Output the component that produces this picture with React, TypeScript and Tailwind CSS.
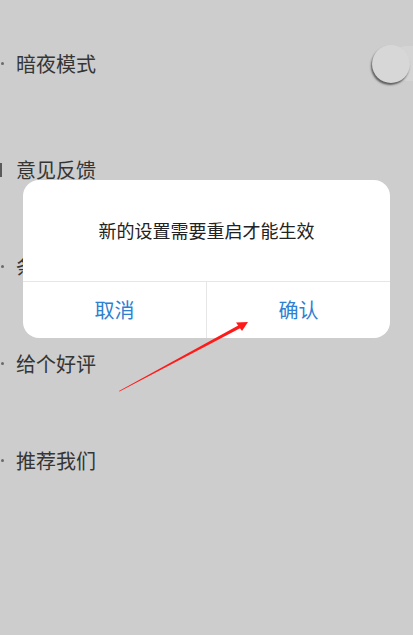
import React from 'react';

const cjk = { fontFamily: '"Noto Sans CJK SC", "Noto Sans", sans-serif' };

const items = [
  { label: '暗夜模式', mark: 'dot', toggle: true },
  { label: '意见反馈', mark: 'bar' },
  { label: '条款说明', mark: 'dot' },
  { label: '给个好评', mark: 'dot' },
  { label: '推荐我们', mark: 'dot' },
];

function Toggle() {
  return (
    <div className="relative mr-[-29px] h-[38px] w-[70px] shrink-0">
      <div className="absolute left-[18px] top-[1px] h-[35px] w-[60px] rounded-full bg-[#d4d4d4]" />
      <div className="absolute left-0 top-0 h-[38px] w-[38px] rounded-full bg-[#d7d7d7] shadow-[-1px_2px_2px_rgba(0,0,0,0.55)]" />
    </div>
  );
}

function Mark({ kind }: { kind: string }) {
  if (kind === 'bar') return <div className="h-[14px] w-[2px] bg-[#5a5a5a]" />;
  return <div className="ml-[1px] h-[3px] w-[3px] rounded-full bg-[#6a6a6a]" />;
}

export default function App() {
  return (
    <div className="relative h-[635px] w-[413px] overflow-hidden bg-[#cdcdcd]" style={cjk}>
      <div className="flex flex-col pt-[15px]">
        {items.map((it, i) => (
          <div
            key={it.label}
            className={`flex h-[97px] items-center justify-between ${i === 0 ? 'mb-[9px]' : ''}`}
          >
            <div className="flex items-center">
              <div className="flex w-[16px] items-center">
                <Mark kind={it.mark} />
              </div>
              <span className="text-[20px] leading-none text-[#353535]">{it.label}</span>
            </div>
            {it.toggle && <Toggle />}
          </div>
        ))}
      </div>

      {/* dialog */}
      <div className="absolute left-[23px] top-[180px] w-[367px] overflow-hidden rounded-[16px] bg-white">
        <div className="flex h-[101px] items-center justify-center text-[18px] text-[#222]">
          新的设置需要重启才能生效
        </div>
        <div className="flex h-[57px] border-t border-[#e6e6e6]">
          <div className="flex flex-1 items-center justify-center border-r border-[#e6e6e6] text-[20px] text-[#2d80d2]">
            取消
          </div>
          <div className="flex flex-1 items-center justify-center text-[20px] text-[#2d80d2]">
            确认
          </div>
        </div>
      </div>

      {/* annotation arrow */}
      <svg className="pointer-events-none absolute left-0 top-0" width="413" height="635">
        <polygon points="119,391 240,324.5 241.5,327.5 119.5,391.5" fill="#ff1a1a" />
        <polygon points="248,322 236,322.5 242,331" fill="#ff1a1a" />
      </svg>
    </div>
  );
}
